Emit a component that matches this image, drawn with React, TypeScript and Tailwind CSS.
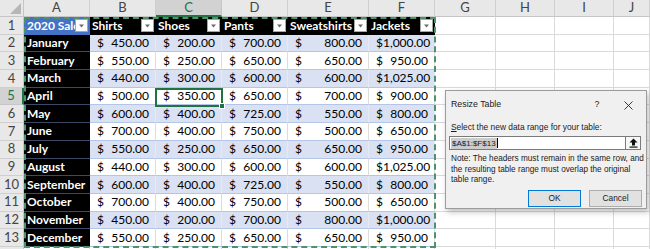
import React from 'react';

const cols = ['A', 'B', 'C', 'D', 'E', 'F', 'G', 'H', 'I', 'J'];
const headers = ['Shirts', 'Shoes', 'Pants', 'Sweatshirts', 'Jackets'];

const rows: [string, string[]][] = [
  ['January', ['450.00', '200.00', '700.00', '800.00', '1,000.00']],
  ['February', ['550.00', '250.00', '650.00', '650.00', '950.00']],
  ['March', ['440.00', '300.00', '600.00', '600.00', '1,025.00']],
  ['April', ['500.00', '350.00', '650.00', '700.00', '900.00']],
  ['May', ['600.00', '400.00', '725.00', '550.00', '800.00']],
  ['June', ['700.00', '400.00', '750.00', '500.00', '650.00']],
  ['July', ['550.00', '250.00', '650.00', '650.00', '950.00']],
  ['August', ['440.00', '300.00', '600.00', '600.00', '1,025.00']],
  ['September', ['600.00', '400.00', '725.00', '550.00', '800.00']],
  ['October', ['700.00', '400.00', '750.00', '500.00', '650.00']],
  ['November', ['450.00', '200.00', '700.00', '800.00', '1,000.00']],
  ['December', ['550.00', '250.00', '650.00', '650.00', '950.00']],
];

function FilterButton() {
  return (
    <span className="shrink-0 w-[13px] h-[13px] mr-[2px] bg-white border border-[#a6a6a6] flex items-center justify-center">
      <svg width="7" height="4" viewBox="0 0 7 4">
        <path d="M1 0.5h5L3.5 3.5z" fill="#6b6b6b" />
      </svg>
    </span>
  );
}

function ColHeader({ label, selected }: { label: string; selected?: boolean }) {
  return (
    <div
      className={
        selected
          ? 'flex items-center justify-center bg-[#d2d2d2] text-[#217346] border-r border-[#c6c6c6] border-b-2 border-b-[#217346] text-[13px]'
          : 'flex items-center justify-center bg-[#e8e8e8] text-[#444] border-r border-[#cfcfcf] border-b border-b-[#c6c6c6] text-[13px]'
      }
    >
      {label}
    </div>
  );
}

function RowHeader({ n, selected }: { n?: number; selected?: boolean }) {
  return (
    <div
      className={
        selected
          ? 'flex items-center justify-center bg-[#d2d2d2] text-[#217346] border-b border-[#c6c6c6] border-r-2 border-r-[#217346] text-[13px]'
          : 'flex items-center justify-center bg-[#e8e8e8] text-[#444] border-b border-[#cfcfcf] border-r border-r-[#c6c6c6] text-[13px]'
      }
    >
      {n}
    </div>
  );
}

function Money({ value, band }: { value: string; band: boolean }) {
  return (
    <div
      className={
        band
          ? 'flex items-center justify-between pl-[7px] pr-[6px] bg-[#d9e1f2] border-b border-[#b4c6e7] border-r border-r-[#e4e9f5] text-[12px] text-black'
          : 'flex items-center justify-between pl-[7px] pr-[6px] bg-white border-b border-[#b4c6e7] border-r border-r-[#dcdcdc] text-[12px] text-black'
      }
    >
      <span>$</span>
      <span>{value}</span>
    </div>
  );
}

function Empty() {
  return <div className="bg-white border-r border-b border-[#dadada]" />;
}

function UploadIcon() {
  return (
    <svg width="9" height="10" viewBox="0 0 9 10">
      <path d="M4.5 0.5L8.5 4.5H6V7.5H3V4.5H0.5z" fill="#111" />
      <rect x="0.5" y="8.5" width="8" height="1.2" fill="#111" />
    </svg>
  );
}

function ResizeDialog() {
  return (
    <div className="absolute left-[445px] top-[90px] w-[202px] h-[119px] bg-[#f0f0f0] border border-[#9c9c9c] shadow-[2px_3px_6px_rgba(0,0,0,0.25)] font-['Liberation_Sans',sans-serif] text-[8.4px] text-[#1a1a1a] pl-[5px] pr-[3px]">
      <div className="flex items-center h-[28px] text-[8.8px]">
        <span className="flex-1">Resize Table</span>
        <span className="w-[12px] text-center mr-[21px]">?</span>
        <svg width="9" height="9" viewBox="0 0 9 9" className="mr-[10px]">
          <path d="M0.5 0.5L8.5 8.5M8.5 0.5L0.5 8.5" stroke="#222" strokeWidth="0.9" />
        </svg>
      </div>
      <div className="leading-[11px] mt-[3px] whitespace-nowrap">
        <span className="underline">S</span>elect the new data range for your table:
      </div>
      <div className="flex h-[14px] mt-[3px] -ml-[2px] mr-[2px]">
        <div className="flex-1 bg-white border border-[#7a7a7a] flex items-center pl-[1px]">
          <span className="bg-[#cccccc] text-[8px] leading-[11px] px-[1px]">$A$1:$F$13</span>
          <span className="w-px h-[10px] bg-black" />
        </div>
        <div className="w-[15px] bg-[#f7f7f7] border border-l-0 border-[#7a7a7a] flex items-center justify-center">
          <UploadIcon />
        </div>
      </div>
      <div className="leading-[10.7px] mt-[4px] text-[8.2px] whitespace-nowrap">
        <div>Note: The headers must remain in the same row, and</div>
        <div>the resulting table range must overlap the original</div>
        <div>table range.</div>
      </div>
      <div className="flex justify-end gap-[8px] mt-[4px] mr-[1px]">
        <button className="w-[53px] h-[17px] bg-[#e1e1e1] border border-[#0078d7] text-[8.4px]">OK</button>
        <button className="w-[53px] h-[17px] bg-[#e1e1e1] border border-[#adadad] text-[8.4px]">Cancel</button>
      </div>
    </div>
  );
}

export default function App() {
  return (
    <div className="relative w-[650px] h-[249px] overflow-hidden bg-white font-['Lato',sans-serif]">
      <div className="grid grid-cols-[24px_66px_66px_66px_66px_81px_66px_61px_59px_59px_1fr] grid-rows-[17px_repeat(14,17.7px)]">
        {/* corner */}
        <div className="relative bg-[#e8e8e8] border-r border-b border-[#c6c6c6]">
          <svg width="11" height="11" viewBox="0 0 11 11" className="absolute right-[2px] bottom-[2px]">
            <path d="M11 0V11H0z" fill="#b7b7b7" />
          </svg>
        </div>
        {cols.map((c) => (
          <ColHeader key={c} label={c} selected={c === 'C'} />
        ))}

        {/* header row */}
        <RowHeader n={1} />
        <div className="flex items-center bg-[#4472c4] text-white font-bold text-[12px] pl-[3px] overflow-hidden">
          <span className="flex-1 overflow-hidden whitespace-nowrap">2020 Sales</span>
          <FilterButton />
        </div>
        {headers.map((h) => (
          <div key={h} className="flex items-center bg-black text-white font-bold text-[12px] pl-[2px] overflow-hidden">
            <span className="flex-1 overflow-hidden whitespace-nowrap">{h}</span>
            <FilterButton />
          </div>
        ))}
        {[0, 1, 2, 3].map((i) => (
          <Empty key={i} />
        ))}

        {rows.map(([month, vals], r) => (
          <React.Fragment key={month}>
            <RowHeader n={r + 2} selected={r + 2 === 5} />
            <div className="flex items-center bg-black text-white font-bold text-[12px] pl-[3px] border-b border-[#3d4a66] whitespace-nowrap overflow-hidden">
              {month}
            </div>
            {vals.map((v, i) => (
              <Money key={i} value={v} band={r % 2 === 0} />
            ))}
            {[0, 1, 2, 3].map((i) => (
              <Empty key={i} />
            ))}
          </React.Fragment>
        ))}

        <RowHeader />
        {cols.map((c) => (
          <Empty key={c} />
        ))}
      </div>

      {/* resize marquee */}
      <div className="absolute left-[24px] top-[17px] w-[412px] h-[231px] border-2 border-dashed border-[#4f9168] pointer-events-none" />

      {/* active cell C5 */}
      <div className="absolute left-[155px] top-[87.5px] w-[68px] h-[19.7px] border-2 border-[#217346] pointer-events-none">
        <span className="absolute -right-[4px] -bottom-[4px] w-[6px] h-[6px] bg-[#217346] border border-white" />
      </div>

      <ResizeDialog />
    </div>
  );
}
